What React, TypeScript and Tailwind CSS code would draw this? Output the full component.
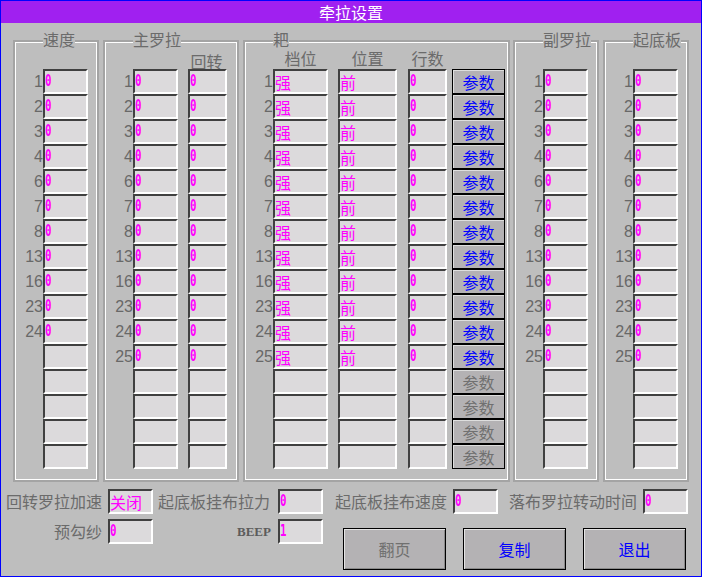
import React from "react";

const CJK = "font-['Noto_Sans_CJK_SC',sans-serif]";
const rows12 = ["1", "2", "3", "4", "6", "7", "8", "13", "16", "23", "24", "25"];

function Field({ w, children }: { w: string; children?: React.ReactNode }) {
  return (
    <div
      className={`h-[25px] ${w} shrink-0 border-2 border-t-[#404040] border-l-[#404040] border-r-white border-b-white bg-[#dcdadc] flex items-center overflow-hidden`}
    >
      {children}
    </div>
  );
}

function Zero({ v = "0" }: { v?: string }) {
  return (
    <span className="inline-block origin-left scale-x-[0.72] font-['DejaVu_Sans_Mono',monospace] font-bold text-[15px] leading-none text-[#ff00ff]">
      {v}
    </span>
  );
}

function Cjk({ v }: { v: string }) {
  return <span className={`${CJK} text-[16px] leading-[16px] text-[#ff00ff]`}>{v}</span>;
}

function Num({ n }: { n?: string }) {
  return (
    <div className="w-[27px] shrink-0 text-right font-['Liberation_Sans',sans-serif] text-[16px] leading-[25px] text-[#686868]">
      {n ?? ""}
    </div>
  );
}

function Group({
  label,
  className,
  children,
}: {
  label: string;
  className: string;
  children: React.ReactNode;
}) {
  return (
    <div className={`relative h-[442px] shrink-0 border-2 border-[#a4a4a4] ${className}`}>
      <div className="h-full border border-white flex flex-col">{children}</div>
      <div
        className={`absolute left-[28px] top-[-11px] bg-[#bebebe] ${CJK} text-[16px] leading-[16px] text-[#6b6b6b]`}
      >
        {label}
      </div>
    </div>
  );
}

function SimpleGroup({ label, count, className }: { label: string; count: number; className: string }) {
  const list = Array.from({ length: 16 }, (_, i) => (i < count ? rows12[i] : undefined));
  return (
    <Group label={label} className={className}>
      <div className="h-[26px]" />
      {list.map((n, i) => (
        <div key={i} className="flex">
          <Num n={n} />
          <Field w="w-[45px]">{n ? <Zero /> : null}</Field>
        </div>
      ))}
    </Group>
  );
}

function ParamBtn({ active }: { active: boolean }) {
  return (
    <div
      className={`h-[25px] w-[53px] shrink-0 ml-[5px] border border-black bg-[#b4b2b4] shadow-[inset_1px_1px_0_#dedede] flex items-center justify-center ${CJK} text-[16px] leading-[16px] ${
        active ? "text-[#0000ff]" : "text-[#707070]"
      }`}
    >
      参数
    </div>
  );
}

function BigBtn({ label, active }: { label: string; active: boolean }) {
  return (
    <div
      className={`h-[42px] w-[103px] shrink-0 border border-black bg-[#b4b2b4] shadow-[inset_1px_1px_0_#e4e4e4,inset_-1px_-1px_0_#8a8a8a] flex items-center justify-center ${CJK} text-[16px] leading-[16px] ${
        active ? "text-[#0000ff]" : "text-[#707070]"
      }`}
    >
      {label}
    </div>
  );
}

function Label({ w, children, extra = "" }: { w: string; children: React.ReactNode; extra?: string }) {
  return (
    <div className={`${w} shrink-0 text-right ${CJK} text-[16px] leading-[25px] text-[#6b6b6b] ${extra}`}>
      {children}
    </div>
  );
}

export default function App() {
  const list16 = Array.from({ length: 16 }, (_, i) => (i < 12 ? rows12[i] : undefined));
  return (
    <div className="w-[702px] h-[577px] border border-[#0000ff] bg-[#bebebe] flex flex-col overflow-hidden">
      <div
        className={`h-[22px] shrink-0 bg-[#a020f0] text-white text-center ${CJK} text-[16px] leading-[22px]`}
      >
        牵拉设置
      </div>

      <div className="flex mt-[17px]">
        <SimpleGroup label="速度" count={11} className="ml-[12px] w-[86px]" />

        <Group label="主罗拉" className="ml-[4px] w-[136px]">
          <div className="h-[26px] flex">
            <div className="ml-[81px] w-[39px] text-center pt-[7px]">
              <span className={`${CJK} text-[16px] leading-[16px] text-[#6b6b6b]`}>回转</span>
            </div>
          </div>
          {list16.map((n, i) => (
            <div key={i} className="flex">
              <Num n={n} />
              <Field w="w-[45px]">{n ? <Zero /> : null}</Field>
              <div className="ml-[10px]">
                <Field w="w-[39px]">{n ? <Zero /> : null}</Field>
              </div>
            </div>
          ))}
        </Group>

        <Group label="耙" className="ml-[4px] w-[267px]">
          <div className={`h-[26px] flex pt-[7px] ${CJK} text-[16px] leading-[16px] text-[#6b6b6b]`}>
            <div className="ml-[27px] w-[55px] text-center">档位</div>
            <div className="ml-[10px] w-[59px] text-center">位置</div>
            <div className="ml-[11px] w-[39px] text-center">行数</div>
          </div>
          {list16.map((n, i) => (
            <div key={i} className="flex">
              <Num n={n} />
              <Field w="w-[55px]">{n ? <Cjk v="强" /> : null}</Field>
              <div className="ml-[10px]">
                <Field w="w-[59px]">{n ? <Cjk v="前" /> : null}</Field>
              </div>
              <div className="ml-[11px]">
                <Field w="w-[39px]">{n ? <Zero /> : null}</Field>
              </div>
              <ParamBtn active={!!n} />
            </div>
          ))}
        </Group>

        <SimpleGroup label="副罗拉" count={12} className="ml-[3px] w-[86px]" />
        <SimpleGroup label="起底板" count={12} className="ml-[4px] w-[86px]" />
      </div>

      <div className="flex mt-[7px]">
        <Label w="w-[101px]">回转罗拉加速</Label>
        <div className="ml-[6px]">
          <Field w="w-[45px]">
            <Cjk v="关闭" />
          </Field>
        </div>
        <Label w="w-[117px]">起底板挂布拉力</Label>
        <div className="ml-[8px]">
          <Field w="w-[45px]">
            <Zero />
          </Field>
        </div>
        <Label w="w-[124px]">起底板挂布速度</Label>
        <div className="ml-[6px]">
          <Field w="w-[45px]">
            <Zero />
          </Field>
        </div>
        <Label w="w-[139px]">落布罗拉转动时间</Label>
        <div className="ml-[6px]">
          <Field w="w-[45px]">
            <Zero />
          </Field>
        </div>
      </div>

      <div className="flex mt-[5px]">
        <div className="flex items-start">
          <Label w="w-[101px]">预勾纱</Label>
          <div className="ml-[6px]">
            <Field w="w-[45px]">
              <Zero />
            </Field>
          </div>
          <div className="w-[118px] shrink-0 text-right font-['Liberation_Serif',serif] font-bold text-[13px] leading-[25px] text-[#5c5c5c]">
            BEEP
          </div>
          <div className="ml-[7px]">
            <Field w="w-[45px]">
              <Zero v="1" />
            </Field>
          </div>
        </div>
        <div className="flex mt-[9px] ml-[20px] gap-[17px]">
          <BigBtn label="翻页" active={false} />
          <BigBtn label="复制" active={true} />
          <BigBtn label="退出" active={true} />
        </div>
      </div>
    </div>
  );
}
